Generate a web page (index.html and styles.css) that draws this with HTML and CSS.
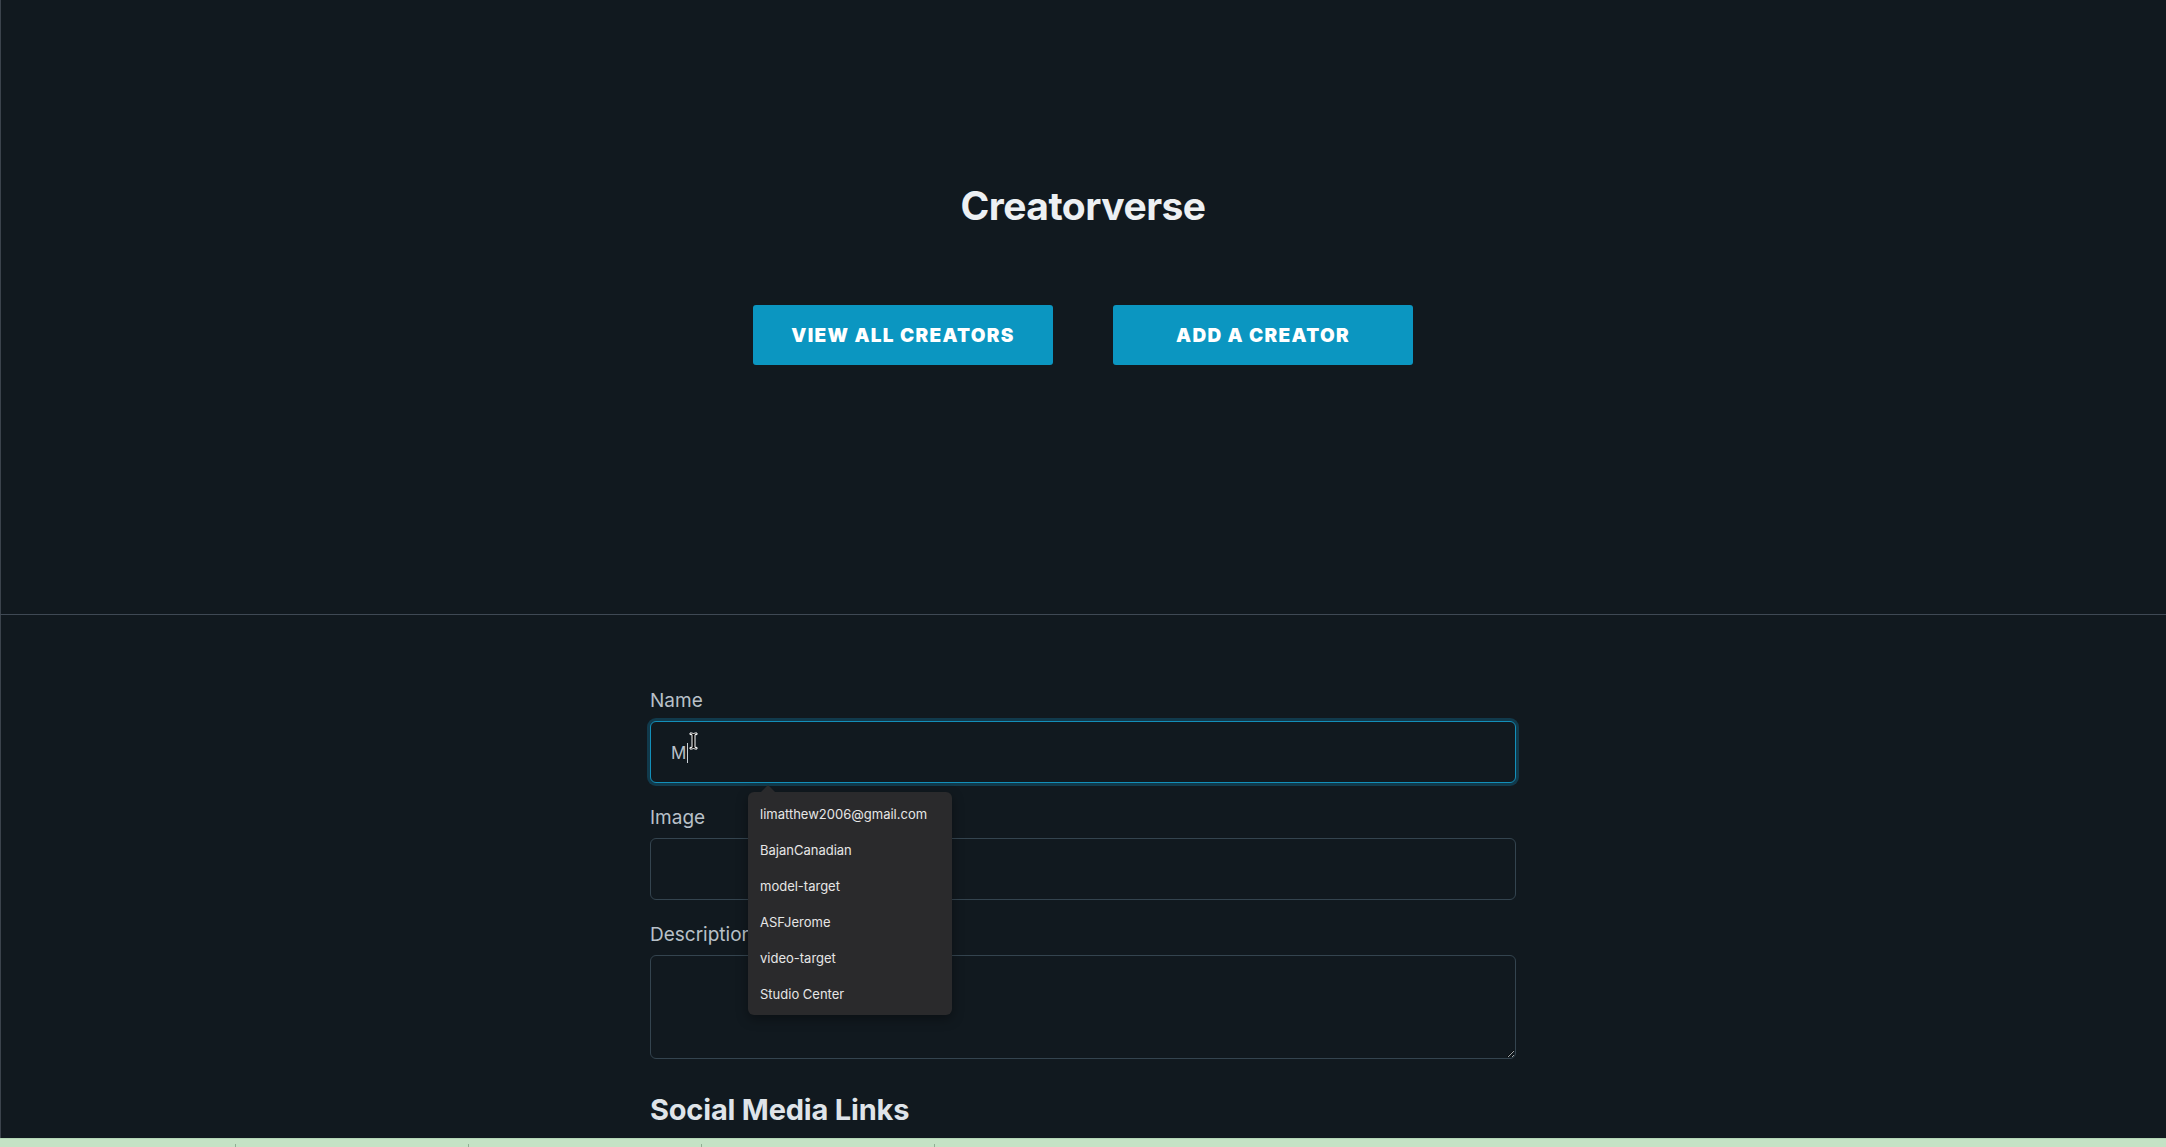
FILE: index.html
```html
<!DOCTYPE html>
<html lang="en">
<head>
<meta charset="utf-8">
<title>Creatorverse</title>
<link rel="stylesheet" href="styles.css">
</head>
<body>
<div class="page">
  <header class="hero">
    <h1 class="title">Creatorverse</h1>
    <nav class="actions">
      <a class="btn" href="#">View All Creators</a>
      <a class="btn" href="#">Add a Creator</a>
    </nav>
  </header>
  <hr class="divider">
  <main class="form-wrap">
    <form class="form">
      <label class="label" for="name">Name</label>
      <div class="field">
        <div id="name" class="input input-focus" role="textbox"><span class="typed">M</span><span class="caret"></span></div>
        <svg class="ibeam" width="9" height="18" viewBox="0 0 9 18" aria-hidden="true">
          <path d="M1 1h2.5l1 1 1-1H8v1.6H6v12.8h2V17H5.5l-1-1-1 1H1v-1.6h2V2.6H1z" fill="#000" stroke="#fff" stroke-width="1"/>
        </svg>
        <ul class="autocomplete">
          <li>limatthew2006@gmail.com</li>
          <li>BajanCanadian</li>
          <li>model-target</li>
          <li>ASFJerome</li>
          <li>video-target</li>
          <li>Studio Center</li>
        </ul>
      </div>
      <label class="label" for="image">Image</label>
      <input id="image" class="input" type="text">
      <label class="label" for="description">Description</label>
      <textarea id="description" class="input textarea"></textarea>
      <h2 class="section-title">Social Media Links</h2>
    </form>
  </main>
</div>
<div class="status-strip">
  <span class="cell first"></span>
  <span class="cell"></span>
  <span class="cell"></span>
  <span class="cell"></span>
</div>
</body>
</html>
```
FILE: styles.css
```css
* { box-sizing: border-box; }

html, body {
  margin: 0;
  padding: 0;
  background: #11191f;
}

body {
  font-family: Inter, "Noto Sans", "Liberation Sans", sans-serif;
  color: #bcc4cc;
}

.page {
  min-height: 100vh;
  box-shadow: inset 1px 0 0 #3b434c;
}

.hero {
  display: flex;
  flex-direction: column;
  align-items: center;
  padding-top: 183px;
  padding-bottom: 249px;
}

.title {
  margin: 0;
  font-size: 39px;
  line-height: 46px;
  font-weight: 700;
  color: #edf0f3;
  letter-spacing: -0.5px;
}

.actions {
  display: flex;
  gap: 60px;
  margin-top: 76px;
}

.btn {
  display: flex;
  align-items: center;
  justify-content: center;
  width: 300px;
  height: 60px;
  background: #0b96c1;
  color: #ffffff;
  border-radius: 3px;
  font-size: 19px;
  font-weight: 900;
  letter-spacing: 1.3px;
  text-transform: uppercase;
  text-decoration: none;
}

.divider {
  margin: 0;
  border: 0;
  height: 1px;
  background: #3f4954;
}

.form-wrap {
  width: 866px;
  margin: 71px auto 0;
}

.form {
  display: flex;
  flex-direction: column;
}

.label {
  display: block;
  font-size: 19px;
  line-height: 30px;
  margin-bottom: 5px;
  color: #b8c0c8;
}

.field {
  position: relative;
  margin-bottom: 20px;
}

.input {
  display: block;
  width: 100%;
  height: 62px;
  margin: 0 0 20px;
  padding: 0 20px;
  background: #11191f;
  border: 1px solid #34444f;
  border-radius: 6px;
  color: #c0c7cf;
  font-family: inherit;
  font-size: 17px;
  outline: none;
}

.field .input {
  margin-bottom: 0;
}

.input-focus {
  display: flex;
  align-items: center;
  padding-top: 2px;
  border-color: #138fb9;
  box-shadow: 0 0 0 3px rgba(16, 120, 160, 0.35);
}

.typed {
  color: #b9c1ca;
}

.caret {
  display: inline-block;
  width: 1px;
  height: 20px;
  margin-left: 1px;
  background: #c9d0d6;
}

.ibeam {
  position: absolute;
  left: 39px;
  top: 11px;
}

.textarea {
  height: 104px;
  padding: 14px 20px;
  resize: vertical;
}

.autocomplete {
  position: absolute;
  left: 98px;
  top: 71px;
  z-index: 5;
  width: 204px;
  margin: 0;
  padding: 4px 0 3px;
  list-style: none;
  background: #2a2a2c;
  border-radius: 6px;
  box-shadow: 0 4px 12px rgba(0, 0, 0, 0.35);
}

.autocomplete::before {
  content: "";
  position: absolute;
  left: 13px;
  top: -7px;
  border-left: 7px solid transparent;
  border-right: 7px solid transparent;
  border-bottom: 7px solid #2a2a2c;
}

.autocomplete li {
  height: 36px;
  line-height: 36px;
  padding: 0 12px;
  font-size: 13px;
  color: #e6e6e6;
  white-space: nowrap;
}

.section-title {
  margin: 14px 0 0;
  font-size: 29px;
  line-height: 34px;
  font-weight: 700;
  letter-spacing: -0.2px;
  color: #dfe4e9;
}

.status-strip {
  position: fixed;
  left: 0;
  right: 0;
  bottom: 0;
  height: 9px;
  display: flex;
  align-items: flex-end;
  background: #c4e3c5;
  border-top: 1px solid #b3d6b6;
}

.cell {
  width: 233px;
  height: 3px;
  border-right: 1px solid #8fae93;
}

.cell.first {
  width: 236px;
}
```
